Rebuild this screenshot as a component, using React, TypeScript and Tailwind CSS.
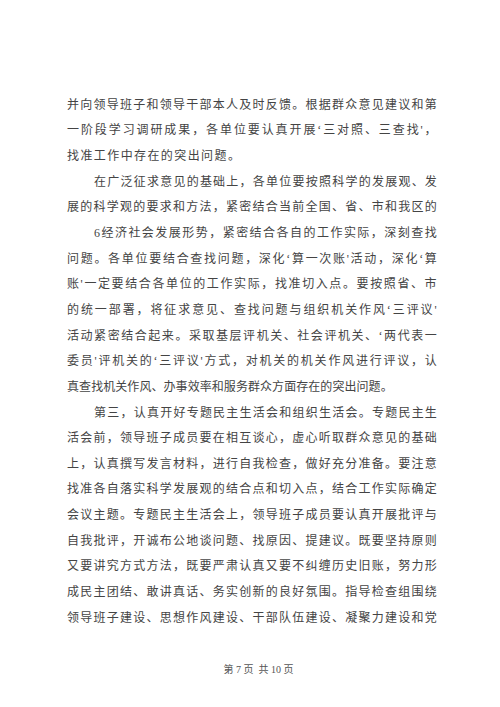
const lines: { text: string; indent?: boolean; width?: number }[] = [
  { text: "并向领导班子和领导干部本人及时反馈。根据群众意见建议和第" },
  { text: "一阶段学习调研成果，各单位要认真开展‘三对照、三查找'，" },
  { text: "找准工作中存在的突出问题。", width: 173 },
  { text: "在广泛征求意见的基础上，各单位要按照科学的发展观、发", indent: true },
  { text: "展的科学观的要求和方法，紧密结合当前全国、省、市和我区的" },
  { text: "6经济社会发展形势，紧密结合各自的工作实际，深刻查找", indent: true },
  { text: "问题。各单位要结合查找问题，深化‘算一次账'活动，深化‘算" },
  { text: "账'一定要结合各单位的工作实际，找准切入点。要按照省、市" },
  { text: "的统一部署，将征求意见、查找问题与组织机关作风‘三评议'" },
  { text: "活动紧密结合起来。采取基层评机关、社会评机关、‘两代表一" },
  { text: "委员'评机关的‘三评议'方式，对机关的机关作风进行评议，认" },
  { text: "真查找机关作风、办事效率和服务群众方面存在的突出问题。", width: 326 },
  { text: "第三，认真开好专题民主生活会和组织生活会。专题民主生", indent: true },
  { text: "活会前，领导班子成员要在相互谈心，虚心听取群众意见的基础" },
  { text: "上，认真撰写发言材料，进行自我检查，做好充分准备。要注意" },
  { text: "找准各自落实科学发展观的结合点和切入点，结合工作实际确定" },
  { text: "会议主题。专题民主生活会上，领导班子成员要认真开展批评与" },
  { text: "自我批评，开诚布公地谈问题、找原因、提建议。既要坚持原则" },
  { text: "又要讲究方式方法，既要严肃认真又要不纠缠历史旧账，努力形" },
  { text: "成民主团结、敢讲真话、务实创新的良好氛围。指导检查组围绕" },
  { text: "领导班子建设、思想作风建设、干部队伍建设、凝聚力建设和党" },
];

function Line({ text, indent, width }: { text: string; indent?: boolean; width?: number }) {
  const w = width ?? (indent ? 343 : 370);
  return (
    <div
      className={`flex h-[25.65px] items-center justify-between ${indent ? "ml-[94px]" : "ml-[67px]"}`}
      style={{ width: w }}
    >
      {Array.from(text).map((ch, i) => (
        <span key={i} className="leading-none">
          {ch}
        </span>
      ))}
    </div>
  );
}

export default function App() {
  return (
    <div
      className="w-[500px] h-[707px] bg-white text-[#444] text-[12px] pt-[92px] overflow-hidden"
      style={{ fontFamily: '"Liberation Serif", "Noto Sans CJK SC", serif' }}
    >
      {lines.map((l, i) => (
        <Line key={i} {...l} />
      ))}
      <div className="mt-[32px] pl-[17px] text-center text-[10px] text-[#555]">
        第 7 页&nbsp;&nbsp;共 10 页
      </div>
    </div>
  );
}
